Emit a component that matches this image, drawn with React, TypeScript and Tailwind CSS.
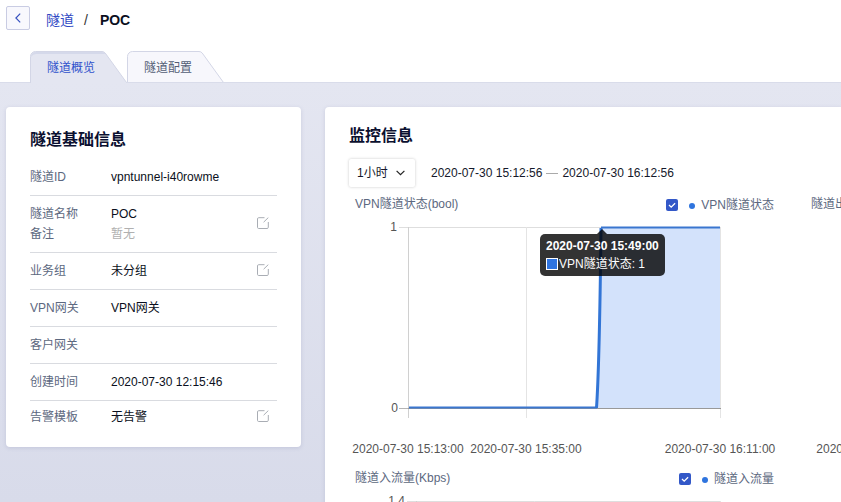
import React, { useId } from "react";

function EditIcon() {
  return (
    <button type="button" aria-label="编辑" className="mr-2 pb-0.5 text-[#a9adb4]">
      <svg width="12" height="12" viewBox="0 0 12 12" fill="none" stroke="currentColor" strokeWidth="1">
        <path d="M7.5 0.7H1.7a1.2 1.2 0 0 0-1.2 1.2v8.4a1.2 1.2 0 0 0 1.2 1.2h8.4a1.2 1.2 0 0 0 1.2-1.2V5" />
        <path d="M6.6 5.2 11.3 0.6" />
      </svg>
    </button>
  );
}

type Field = { label: string; value: string; muted?: boolean };

const groups: { fields: Field[]; editable?: boolean }[] = [
  { fields: [{ label: "隧道ID", value: "vpntunnel-i40rowme" }] },
  {
    fields: [
      { label: "隧道名称", value: "POC" },
      { label: "备注", value: "暂无", muted: true },
    ],
    editable: true,
  },
  { fields: [{ label: "业务组", value: "未分组" }], editable: true },
  { fields: [{ label: "VPN网关", value: "VPN网关" }] },
  { fields: [{ label: "客户网关", value: "" }] },
  { fields: [{ label: "创建时间", value: "2020-07-30 12:15:46" }] },
  { fields: [{ label: "告警模板", value: "无告警" }], editable: true },
];

function InfoCard() {
  return (
    <section className="w-[295px] shrink-0 rounded bg-white px-6 pt-[21px] pb-5 shadow-[0_1px_4px_rgba(60,70,130,0.15)]">
      <h2 className="mb-[7px] text-base leading-6 font-bold text-[#0b1030]">隧道基础信息</h2>
      {groups.map((g) => (
        <div
          key={g.fields[0].label}
          className="flex items-center justify-between border-b border-[#d9dbe0] py-2 last:border-b-0 last:pt-1.5 last:pb-0"
        >
          <dl className="flex-1">
            {g.fields.map((f) => (
              <div key={f.label} className="flex h-5 leading-5">
                <dt className="w-[81px] text-[#5c6880]">{f.label}</dt>
                <dd className={f.muted ? "text-[#b0b0b0]" : "text-[#0a0f20]"}>{f.value}</dd>
              </div>
            ))}
          </dl>
          {g.editable && <EditIcon />}
        </div>
      ))}
    </section>
  );
}

function Tab({ label, active }: { label: string; active?: boolean }) {
  return (
    <button
      type="button"
      role="tab"
      aria-selected={!!active}
      className={`relative h-8 w-[97px] pt-0.5 pl-[17px] text-left leading-[30px] ${active ? "text-[#2f52cc]" : "text-[#535e75]"}`}
    >
      <svg className="absolute inset-0" width="97" height="32" viewBox="0 0 97 32" fill="none">
        <path
          d="M0.5 32V5.5a5 5 0 0 1 5-5H72q2 0 3.2 1.5L96.5 31.5V32Z"
          fill={active ? "#e4e6f1" : "#f7f7fc"}
        />
        {active && <path d="M1 6a5 5 0 0 1 5-5H72q2 0 3.5 2H6Q3 3 1 6Z" fill="#d5d9ea" />}
        <path
          d="M0.5 32V5.5a5 5 0 0 1 5-5H72q2 0 3.2 1.5L96.5 31.5"
          stroke="#d3d6e6"
        />
        {!active && <path d="M0 31.5H97" stroke="#d9dcea" />}
      </svg>
      <span className="relative">{label}</span>
    </button>
  );
}

type ChartProps = {
  title: string;
  series: string;
  yMax: string;
  left: number;
  step?: boolean;
};

function Chart({ title, series, yMax, left, step }: ChartProps) {
  const id = useId();
  const ticks = [
    { x: left, label: "2020-07-30 15:13:00" },
    { x: left + 118, label: "2020-07-30 15:35:00" },
    { x: 371, label: "2020-07-30 16:11:00" },
  ];
  return (
    <figure className="relative w-[456px] shrink-0">
      <figcaption className="flex h-5 items-center justify-between pr-[31px] pl-1.5 leading-5 text-[#5c6880]">
        <span>{title}</span>
        <span className="flex items-center pt-0.5">
          <span className="mr-[11px] grid size-3">
            <input
              id={id}
              type="checkbox"
              defaultChecked
              className="col-start-1 row-start-1 size-3 appearance-none rounded-xs bg-[#3358c8]"
            />
            <svg
              className="pointer-events-none col-start-1 row-start-1"
              width="12"
              height="12"
              viewBox="0 0 12 12"
              fill="none"
              stroke="#fff"
              strokeWidth="1.3"
            >
              <path d="m3 6 2.2 2.1L9.1 4.2" />
            </svg>
          </span>
          <span className="mt-0.5 mr-1.5 size-1.5 rounded-full bg-[#2f74de]" />
          <label htmlFor={id}>{series}</label>
        </span>
      </figcaption>
      <svg width="456" height="254" viewBox="0 0 456 254" className="block text-xs">
        <path d={`M${left - 9} 13.5H372`} stroke="#dedede" />
        <path d={`M${left - 9} 194.5H${left}`} stroke="#b5b5b5" />
        {ticks.map((t) => (
          <path key={t.x} d={`M${t.x + 0.5} 13V204`} stroke={t.x === left ? "#d0d0d0" : "#e4e4e4"} />
        ))}
        {step && <path d="M248 194 253 13.5H371V194Z" fill="#d3e2fb" />}
        <path d={`M${left} 194.5H372`} stroke="#999" />
        {step && (
          <>
            <path d="M60 193.5H248" stroke="#3a76cf" strokeWidth="2" />
            <path d="M247.5 194 Q250.5 150 252 14" stroke="#3275d6" strokeWidth="3" fill="none" />
            <path d="M252 13.5H371" stroke="#3a76cf" strokeWidth="2" />
          </>
        )}
        <g fill="#555">
          <text x={left - 11} y="17" textAnchor="end">{yMax}</text>
          <text x={left - 10} y="198" textAnchor="end">0</text>
          {ticks.map((t) => (
            <text key={t.x} x={t.x} y="239" textAnchor="middle">{t.label}</text>
          ))}
        </g>
      </svg>
      {step && (
        <div
          role="tooltip"
          className="absolute top-10 left-[191px] h-[42px] rounded-[5px] bg-black/80 px-1.5 py-[3px] leading-[18px] whitespace-nowrap text-white"
        >
          <svg className="absolute -top-[5px] left-[57px]" width="10" height="5" viewBox="0 0 10 5">
            <path d="M0 5 5 0l5 5Z" fill="#000" fillOpacity="0.8" />
          </svg>
          <div className="font-bold">2020-07-30 15:49:00</div>
          <div className="flex items-center gap-px">
            <span className="size-3 border border-white bg-[#2f74e0]" />
            VPN隧道状态: 1
          </div>
        </div>
      )}
    </figure>
  );
}

function MonitorCard() {
  return (
    <section className="min-w-0 flex-1 overflow-hidden rounded-l bg-white pt-[17px] pl-6 shadow-[0_1px_4px_rgba(60,70,130,0.15)]">
      <h2 className="text-base leading-6 font-bold text-[#0b1030]">监控信息</h2>
      <div className="mt-[11px] flex items-center text-[#14182a]">
        <div className="grid h-7 w-[66px] items-center rounded-xs bg-white shadow-[0_0_3px_rgba(0,0,0,0.22)]">
          <select
            aria-label="时间范围"
            className="col-start-1 row-start-1 h-7 w-full appearance-none bg-transparent pl-2"
          >
            <option>1小时</option>
          </select>
          <svg
            className="pointer-events-none col-start-1 row-start-1 mr-2.5 justify-self-end"
            width="9"
            height="6"
            viewBox="0 0 9 6"
            fill="none"
            stroke="#222"
            strokeWidth="1.2"
          >
            <path d="m0.6 0.8 3.9 3.9L8.4 0.8" />
          </svg>
        </div>
        <div className="flex items-center gap-1 pl-4">
          <span>2020-07-30 15:12:56</span>
          <span className="h-px w-3 bg-[#aaa]" />
          <span>2020-07-30 16:12:56</span>
        </div>
      </div>
      <div className="mt-[7px] flex">
        <Chart title="VPN隧道状态(bool)" series="VPN隧道状态" yMax="1" left={59} step />
        <Chart title="隧道出流量(Kbps)" series="隧道出流量" yMax="1.4" left={67} />
      </div>
      <div className="flex">
        <Chart title="隧道入流量(Kbps)" series="隧道入流量" yMax="1.4" left={67} />
      </div>
    </section>
  );
}

export default function App() {
  return (
    <div className="flex h-screen flex-col overflow-hidden bg-white font-['Liberation_Sans','Noto_Sans_CJK_SC',sans-serif] text-xs">
      <header>
        <nav className="flex items-start px-1.5 pt-1.5 text-sm leading-7">
          <button
            type="button"
            aria-label="返回"
            className="mr-4 flex size-6 items-center justify-center rounded-xs border border-[#c9cce3] bg-[#f8f8fd]"
          >
            <svg width="6" height="10" viewBox="0 0 6 10" fill="none" stroke="#3550c0" strokeWidth="1.2">
              <path d="M5.2 0.7 0.9 5l4.3 4.3" />
            </svg>
          </button>
          <a href="#" className="text-[#2f49c4]">隧道</a>
          <span className="mx-2.5 text-[#333]">/</span>
          <span className="pl-0.5 font-bold text-[#0b0f1e]">POC</span>
        </nav>
        <div role="tablist" className="relative mt-[17px] -mb-px flex pl-[30px]">
          <Tab label="隧道概览" active />
          <Tab label="隧道配置" />
        </div>
      </header>
      <main className="flex min-h-0 flex-1 items-start border-t border-[#d9dcea] bg-linear-to-b from-[#e4e6f1] to-[#d8dbea] pt-6 pl-1.5">
        <InfoCard />
        <div className="ml-6 flex min-w-0 flex-1">
          <MonitorCard />
        </div>
      </main>
    </div>
  );
}
